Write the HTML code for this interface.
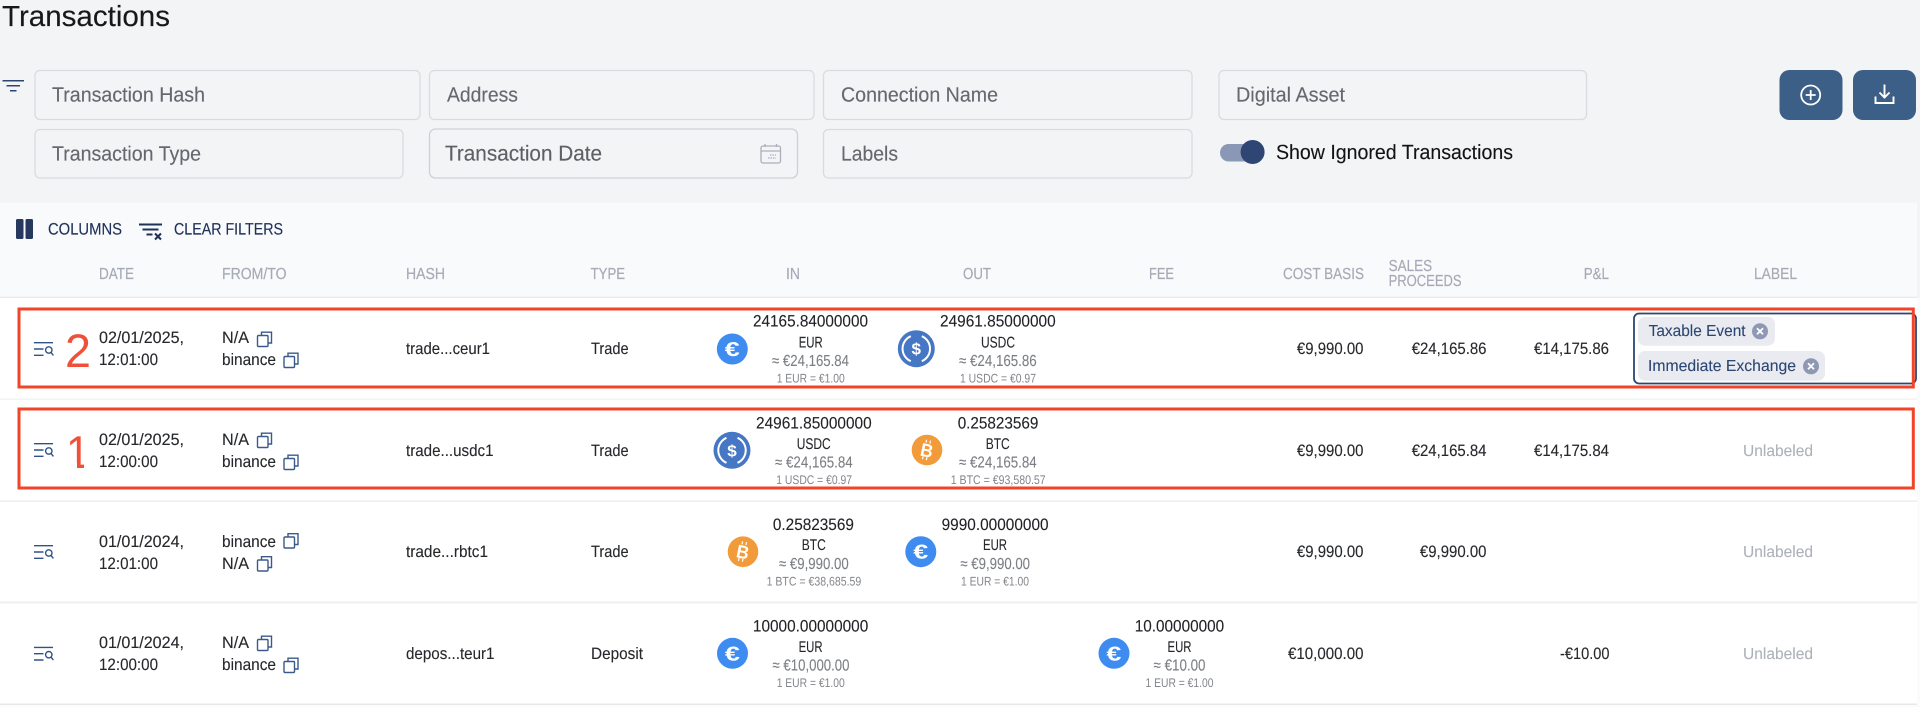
<!DOCTYPE html>
<html><head><meta charset="utf-8"><title>Transactions</title>
<style>
html,body{margin:0;padding:0;background:#f3f4f6;width:1920px;height:707px;overflow:hidden}
svg{display:block}
text{font-family:"Liberation Sans",Arial,sans-serif;text-rendering:geometricPrecision}
.ph{font-size:20.5px;fill:#65686e;stroke:#65686e;stroke-width:.15}
.hd{font-size:16px;fill:#a5aab6;stroke:#a5aab6;stroke-width:.2}
.tb{font-size:16.5px;fill:#1f3158;stroke:#1f3158;stroke-width:.15}
.b{font-size:16.5px;fill:#26282c;stroke:#26282c;stroke-width:.12}
.am{font-size:16.5px;fill:#202226;stroke:#202226;stroke-width:.1}
.sy{font-size:15.5px;fill:#26282c;stroke:#26282c;stroke-width:.1}
.ap{font-size:16px;fill:#7c7f84;stroke:#7c7f84;stroke-width:.1}
.rt{font-size:12.5px;fill:#83868b}
.un{font-size:16px;fill:#adb1b9;stroke:#adb1b9;stroke-width:.1}
.ch{font-size:16px;fill:#2c4672;stroke:#2c4672;stroke-width:.1}
.box{fill:#f3f4f6;stroke:#d9dbdf;stroke-width:1.3}
</style></head><body>
<svg width="1920" height="707" viewBox="0 0 1920 707" xmlns="http://www.w3.org/2000/svg">
<defs>
<clipPath id="one"><path d="M60 425H95V462.500H84V470H77V462.500H60z"/></clipPath>
<g id="cp" fill="none" stroke="#3a5a8c" stroke-width="1.4"><rect x="1" y="4.5" width="10.5" height="11" rx="1"/><path d="M5 4.5V1.2h10v10.8h-3.5"/></g>
<g id="ms" fill="none" stroke="#2f5288" stroke-width="1.4"><path d="M0 .7h19M0 7h9.5M0 13.3h9.5"/><circle cx="14.8" cy="8" r="3.2"/><path d="M17 10.4l2.4 3"/></g>
<g id="eur"><circle r="15.5" fill="#3f8cf0"/><text x="-7.600" y="7" font-size="20" font-weight="700" fill="#fff" textLength="15" lengthAdjust="spacingAndGlyphs">€</text></g>
<g id="usdc"><circle r="18.5" fill="#4577c5"/><path d="M-5.5-12.5A13.6 13.6 0 0 0-5.5 12.5M5.5-12.5A13.6 13.6 0 0 1 5.500 12.500" fill="none" stroke="#fff" stroke-width="2"/><text x="-4.800" y="6" font-size="16.500" font-weight="700" fill="#fff" textLength="9.500" lengthAdjust="spacingAndGlyphs">$</text></g>
<g id="btc"><circle r="15.300" fill="#f19b3a"/><g transform="rotate(12)"><text x="-6.400" y="6.800" font-size="18.500" font-weight="700" fill="#fff" textLength="12.500" lengthAdjust="spacingAndGlyphs">B</text><path d="M-2.500-10v3M1.500-10v3M-2.500 7v3M1.500 7v3" stroke="#fff" stroke-width="1.200"/></g></g>
</defs>

<rect width="1920" height="707" fill="#f3f4f6"/>
<text x="2" y="26" font-size="29" fill="#17181a" stroke="#17181a" stroke-width=".15" textLength="168" lengthAdjust="spacingAndGlyphs">Transactions</text>

<path d="M2.500 80.700h21.500M6.500 85.700h13.500M10 90.700h6.500" fill="none" stroke="#2c4672" stroke-width="1.500"/>

<rect class="box" x="35" y="70.500" width="385" height="49" rx="5"/>
<rect class="box" x="429.500" y="70.500" width="384.500" height="49" rx="5"/>
<rect class="box" x="823.500" y="70.500" width="368.500" height="49" rx="5"/>
<rect class="box" x="1219" y="70.500" width="367.500" height="49" rx="5"/>
<rect class="box" x="35" y="129.500" width="368" height="48.500" rx="5"/>
<rect class="box" x="429.500" y="129" width="368" height="49" rx="6" style="stroke:#ced0d5"/>
<rect class="box" x="823.500" y="129.500" width="368.500" height="48.500" rx="5"/>

<text class="ph" x="52" y="101.500" textLength="153" lengthAdjust="spacingAndGlyphs">Transaction Hash</text>
<text class="ph" x="447" y="101.500" textLength="71" lengthAdjust="spacingAndGlyphs">Address</text>
<text class="ph" x="841" y="101.500" textLength="157" lengthAdjust="spacingAndGlyphs">Connection Name</text>
<text class="ph" x="1236" y="101.500" textLength="109" lengthAdjust="spacingAndGlyphs">Digital Asset</text>
<text class="ph" x="52" y="160.500" textLength="149" lengthAdjust="spacingAndGlyphs">Transaction Type</text>
<text class="ph" x="445" y="160.500" textLength="157" lengthAdjust="spacingAndGlyphs" style="font-size:21.500px;fill:#5c5f65;stroke:#5c5f65">Transaction Date</text>
<text class="ph" x="841" y="160.500" textLength="57" lengthAdjust="spacingAndGlyphs">Labels</text>

<g fill="none" stroke="#a9afbc" stroke-width="1.300"><rect x="761" y="146" width="19.500" height="17" rx="2"/><path d="M761 151h19.500M765 144v3M776.500 144v3"/><path d="M768 158h8M770 155h6" stroke-dasharray="1.500 1"/></g>

<rect x="1220" y="144" width="40" height="17.500" rx="8.700" fill="#8b98b5"/>
<circle cx="1252.600" cy="152" r="12" fill="#2f4675"/>
<text x="1276" y="159" font-size="20.500" fill="#121315" stroke="#121315" stroke-width=".12" textLength="237" lengthAdjust="spacingAndGlyphs">Show Ignored Transactions</text>

<rect x="1779.500" y="70" width="63" height="50" rx="10" fill="#3c5f88"/>
<rect x="1853" y="70" width="63" height="50" rx="10" fill="#3c5f88"/>
<circle cx="1810.700" cy="95" r="9.500" fill="none" stroke="#fff" stroke-width="1.800"/>
<path d="M1810.700 90v10M1805.700 95h10" stroke="#fff" stroke-width="1.800" fill="none"/>
<path d="M1884.500 84.500v13M1879.500 92.500l5 5 5-5M1875.500 96.500v6.500h18v-6.500" stroke="#fff" stroke-width="1.900" fill="none"/>

<rect x="0" y="202.500" width="1917" height="95" fill="#f9fafc"/>
<rect x="0" y="298" width="1917" height="406" fill="#ffffff"/>
<rect x="0" y="296.800" width="1917" height="1.200" fill="#e6e8eb"/>
<rect x="0" y="398.500" width="1917" height="1.200" fill="#eeeff2"/>
<rect x="0" y="500.300" width="1917" height="1.600" fill="#eeeff2"/>
<rect x="0" y="601.500" width="1917" height="2" fill="#eeeff2"/>
<rect x="0" y="703.500" width="1917" height="1.500" fill="#e6e8eb"/>
<rect x="0" y="705" width="1920" height="2" fill="#fbfbfc"/>
<rect x="1917" y="298" width="3" height="409" fill="#fafbfc"/>

<rect x="16" y="219" width="7.500" height="20" rx="1.500" fill="#27385f"/>
<rect x="25.500" y="219" width="7.500" height="20" rx="1.500" fill="#27385f"/>
<text class="tb" x="48" y="234.500" textLength="74" lengthAdjust="spacingAndGlyphs">COLUMNS</text>
<path d="M139 224.500h23M142.500 229.500h16M146.500 234.500h6" stroke="#1f3158" stroke-width="2" fill="none"/>
<path d="M155 233.500l6 6M161 233.500l-6 6" stroke="#1f3158" stroke-width="2" fill="none"/>
<text class="tb" x="174" y="234.500" textLength="109" lengthAdjust="spacingAndGlyphs">CLEAR FILTERS</text>

<text class="hd" x="99" y="279" textLength="35" lengthAdjust="spacingAndGlyphs">DATE</text>
<text class="hd" x="222" y="279" textLength="64.500" lengthAdjust="spacingAndGlyphs">FROM/TO</text>
<text class="hd" x="406" y="279" textLength="39" lengthAdjust="spacingAndGlyphs">HASH</text>
<text class="hd" x="590.600" y="279" textLength="34.500" lengthAdjust="spacingAndGlyphs">TYPE</text>
<text class="hd" x="786" y="279" textLength="14" lengthAdjust="spacingAndGlyphs">IN</text>
<text class="hd" x="963" y="279" textLength="28" lengthAdjust="spacingAndGlyphs">OUT</text>
<text class="hd" x="1149" y="279" textLength="25" lengthAdjust="spacingAndGlyphs">FEE</text>
<text class="hd" x="1283" y="279" textLength="81" lengthAdjust="spacingAndGlyphs">COST BASIS</text>
<text class="hd" x="1388.600" y="271" textLength="43.500" lengthAdjust="spacingAndGlyphs">SALES</text>
<text class="hd" x="1388.600" y="286" textLength="73" lengthAdjust="spacingAndGlyphs">PROCEEDS</text>
<text class="hd" x="1583.700" y="279" textLength="25.300" lengthAdjust="spacingAndGlyphs">P&amp;L</text>
<text class="hd" x="1754" y="279" textLength="43" lengthAdjust="spacingAndGlyphs">LABEL</text>

<!-- Row 1 -->
<use href="#ms" x="34" y="342"/>
<text class="b" x="99" y="343" textLength="85" lengthAdjust="spacingAndGlyphs">02/01/2025,</text>
<text class="b" x="99" y="365" textLength="59" lengthAdjust="spacingAndGlyphs">12:01:00</text>
<text class="b" x="222" y="343" textLength="27" lengthAdjust="spacingAndGlyphs">N/A</text>
<use href="#cp" x="256.500" y="331"/>
<text class="b" x="222" y="365" textLength="54" lengthAdjust="spacingAndGlyphs">binance</text>
<use href="#cp" x="283" y="352"/>
<text class="b" x="406" y="354" textLength="84" lengthAdjust="spacingAndGlyphs">trade...ceur1</text>
<text class="b" x="591" y="354" textLength="37.600" lengthAdjust="spacingAndGlyphs">Trade</text>
<use href="#eur" x="732.300" y="349"/>
<text class="am" x="753" y="326.700" textLength="115" lengthAdjust="spacingAndGlyphs">24165.84000000</text>
<text class="sy" x="798.700" y="347.300" textLength="24" lengthAdjust="spacingAndGlyphs">EUR</text>
<text class="ap" x="772" y="366" textLength="77" lengthAdjust="spacingAndGlyphs">≈ €24,165.84</text>
<text class="rt" x="776.700" y="382.700" textLength="68" lengthAdjust="spacingAndGlyphs">1 EUR = €1.00</text>
<use href="#usdc" x="916.300" y="348.700"/>
<text class="am" x="940" y="326.700" textLength="115.700" lengthAdjust="spacingAndGlyphs">24961.85000000</text>
<text class="sy" x="981" y="347.300" textLength="34" lengthAdjust="spacingAndGlyphs">USDC</text>
<text class="ap" x="959" y="366" textLength="77.700" lengthAdjust="spacingAndGlyphs">≈ €24,165.86</text>
<text class="rt" x="960" y="382.700" textLength="76" lengthAdjust="spacingAndGlyphs">1 USDC = €0.97</text>
<text class="b" x="1296.900" y="354" textLength="66.600" lengthAdjust="spacingAndGlyphs">€9,990.00</text>
<text class="b" x="1411.700" y="354" textLength="74.800" lengthAdjust="spacingAndGlyphs">€24,165.86</text>
<text class="b" x="1534" y="354" textLength="75" lengthAdjust="spacingAndGlyphs">€14,175.86</text>
<rect x="1634" y="313.500" width="282" height="70" rx="5" fill="#fff" stroke="#2c4672" stroke-width="1.800"/>
<rect x="1638" y="317" width="137" height="28.700" rx="7" fill="#e9ebf1"/>
<text class="ch" x="1648.600" y="336" textLength="97" lengthAdjust="spacingAndGlyphs">Taxable Event</text>
<circle cx="1760" cy="331.300" r="8" fill="#8e98b4"/>
<path d="M1757 328.300l6 6M1763 328.300l-6 6" stroke="#fff" stroke-width="1.800"/>
<rect x="1638" y="351" width="187" height="29.700" rx="7" fill="#e9ebf1"/>
<text class="ch" x="1648" y="371" textLength="148" lengthAdjust="spacingAndGlyphs">Immediate Exchange</text>
<circle cx="1811" cy="366.300" r="8" fill="#8e98b4"/>
<path d="M1808 363.300l6 6M1814 363.300l-6 6" stroke="#fff" stroke-width="1.800"/>

<!-- Row 2 -->
<use href="#ms" x="34" y="443"/>
<text class="b" x="99" y="445" textLength="85" lengthAdjust="spacingAndGlyphs">02/01/2025,</text>
<text class="b" x="99" y="467" textLength="59" lengthAdjust="spacingAndGlyphs">12:00:00</text>
<text class="b" x="222" y="445" textLength="27" lengthAdjust="spacingAndGlyphs">N/A</text>
<use href="#cp" x="256.500" y="432"/>
<text class="b" x="222" y="467" textLength="54" lengthAdjust="spacingAndGlyphs">binance</text>
<use href="#cp" x="283" y="454"/>
<text class="b" x="406" y="456" textLength="87.500" lengthAdjust="spacingAndGlyphs">trade...usdc1</text>
<text class="b" x="591" y="456" textLength="37.600" lengthAdjust="spacingAndGlyphs">Trade</text>
<use href="#usdc" x="732" y="450.300"/>
<text class="am" x="756" y="428.300" textLength="115.700" lengthAdjust="spacingAndGlyphs">24961.85000000</text>
<text class="sy" x="796.700" y="449" textLength="34" lengthAdjust="spacingAndGlyphs">USDC</text>
<text class="ap" x="775" y="467.600" textLength="77.700" lengthAdjust="spacingAndGlyphs">≈ €24,165.84</text>
<text class="rt" x="776.300" y="484" textLength="75.700" lengthAdjust="spacingAndGlyphs">1 USDC = €0.97</text>
<use href="#btc" x="927" y="450"/>
<text class="am" x="957.700" y="428.300" textLength="80.700" lengthAdjust="spacingAndGlyphs">0.25823569</text>
<text class="sy" x="985.700" y="449" textLength="24" lengthAdjust="spacingAndGlyphs">BTC</text>
<text class="ap" x="959" y="467.600" textLength="77.700" lengthAdjust="spacingAndGlyphs">≈ €24,165.84</text>
<text class="rt" x="950.700" y="484" textLength="95" lengthAdjust="spacingAndGlyphs">1 BTC = €93,580.57</text>
<text class="b" x="1296.900" y="456" textLength="66.600" lengthAdjust="spacingAndGlyphs">€9,990.00</text>
<text class="b" x="1411.700" y="456" textLength="74.800" lengthAdjust="spacingAndGlyphs">€24,165.84</text>
<text class="b" x="1534" y="456" textLength="75" lengthAdjust="spacingAndGlyphs">€14,175.84</text>
<text class="un" x="1743" y="456" textLength="70" lengthAdjust="spacingAndGlyphs">Unlabeled</text>

<!-- Row 3 -->
<use href="#ms" x="34" y="545"/>
<text class="b" x="99" y="547" textLength="85" lengthAdjust="spacingAndGlyphs">01/01/2024,</text>
<text class="b" x="99" y="569" textLength="59" lengthAdjust="spacingAndGlyphs">12:01:00</text>
<text class="b" x="222" y="547" textLength="54" lengthAdjust="spacingAndGlyphs">binance</text>
<use href="#cp" x="283" y="532.500"/>
<text class="b" x="222" y="569" textLength="27" lengthAdjust="spacingAndGlyphs">N/A</text>
<use href="#cp" x="256.500" y="555.500"/>
<text class="b" x="406" y="557" textLength="82" lengthAdjust="spacingAndGlyphs">trade...rbtc1</text>
<text class="b" x="591" y="557" textLength="37.600" lengthAdjust="spacingAndGlyphs">Trade</text>
<use href="#btc" x="743" y="551.700"/>
<text class="am" x="772.900" y="530" textLength="81" lengthAdjust="spacingAndGlyphs">0.25823569</text>
<text class="sy" x="801.800" y="550" textLength="24" lengthAdjust="spacingAndGlyphs">BTC</text>
<text class="ap" x="779" y="569" textLength="69.700" lengthAdjust="spacingAndGlyphs">≈ €9,990.00</text>
<text class="rt" x="766.600" y="585.700" textLength="94.700" lengthAdjust="spacingAndGlyphs">1 BTC = €38,685.59</text>
<use href="#eur" x="920.800" y="551.700"/>
<text class="am" x="941.600" y="530" textLength="107" lengthAdjust="spacingAndGlyphs">9990.00000000</text>
<text class="sy" x="983" y="550" textLength="24" lengthAdjust="spacingAndGlyphs">EUR</text>
<text class="ap" x="960.400" y="569" textLength="69.600" lengthAdjust="spacingAndGlyphs">≈ €9,990.00</text>
<text class="rt" x="961" y="585.700" textLength="68" lengthAdjust="spacingAndGlyphs">1 EUR = €1.00</text>
<text class="b" x="1296.900" y="557" textLength="66.600" lengthAdjust="spacingAndGlyphs">€9,990.00</text>
<text class="b" x="1419.900" y="557" textLength="66.600" lengthAdjust="spacingAndGlyphs">€9,990.00</text>
<text class="un" x="1743" y="557" textLength="70" lengthAdjust="spacingAndGlyphs">Unlabeled</text>

<!-- Row 4 -->
<use href="#ms" x="34" y="646.700"/>
<text class="b" x="99" y="648" textLength="85" lengthAdjust="spacingAndGlyphs">01/01/2024,</text>
<text class="b" x="99" y="670" textLength="59" lengthAdjust="spacingAndGlyphs">12:00:00</text>
<text class="b" x="222" y="648" textLength="27" lengthAdjust="spacingAndGlyphs">N/A</text>
<use href="#cp" x="256.500" y="635"/>
<text class="b" x="222" y="670" textLength="54" lengthAdjust="spacingAndGlyphs">binance</text>
<use href="#cp" x="283" y="657"/>
<text class="b" x="406" y="659" textLength="88.500" lengthAdjust="spacingAndGlyphs">depos...teur1</text>
<text class="b" x="591" y="659" textLength="52" lengthAdjust="spacingAndGlyphs">Deposit</text>
<use href="#eur" x="732.500" y="653.300"/>
<text class="am" x="752.900" y="631.700" textLength="115.400" lengthAdjust="spacingAndGlyphs">10000.00000000</text>
<text class="sy" x="798.600" y="652" textLength="24" lengthAdjust="spacingAndGlyphs">EUR</text>
<text class="ap" x="772.500" y="670.500" textLength="77" lengthAdjust="spacingAndGlyphs">≈ €10,000.00</text>
<text class="rt" x="776.700" y="687" textLength="68" lengthAdjust="spacingAndGlyphs">1 EUR = €1.00</text>
<use href="#eur" x="1114" y="653.300"/>
<text class="am" x="1134.700" y="631.700" textLength="89.500" lengthAdjust="spacingAndGlyphs">10.00000000</text>
<text class="sy" x="1167.500" y="652" textLength="24" lengthAdjust="spacingAndGlyphs">EUR</text>
<text class="ap" x="1153.500" y="670.500" textLength="52" lengthAdjust="spacingAndGlyphs">≈ €10.00</text>
<text class="rt" x="1145.500" y="687" textLength="68" lengthAdjust="spacingAndGlyphs">1 EUR = €1.00</text>
<text class="b" x="1288" y="659" textLength="75.500" lengthAdjust="spacingAndGlyphs">€10,000.00</text>
<text class="b" x="1560" y="659" textLength="49.500" lengthAdjust="spacingAndGlyphs">-€10.00</text>
<text class="un" x="1743" y="659" textLength="70" lengthAdjust="spacingAndGlyphs">Unlabeled</text>

<!-- Annotations -->
<rect x="19" y="309" width="1894.300" height="78" fill="none" stroke="#f2442a" stroke-width="3"/>
<rect x="19" y="409" width="1894.300" height="79" fill="none" stroke="#f2442a" stroke-width="3"/>
<text x="65" y="367" font-size="47" fill="#f0503a" textLength="26" lengthAdjust="spacingAndGlyphs">2</text>
<text x="66" y="468" font-size="46" fill="#f0503a" textLength="24" lengthAdjust="spacingAndGlyphs" clip-path="url(#one)">1</text>
</svg>
</body></html>
